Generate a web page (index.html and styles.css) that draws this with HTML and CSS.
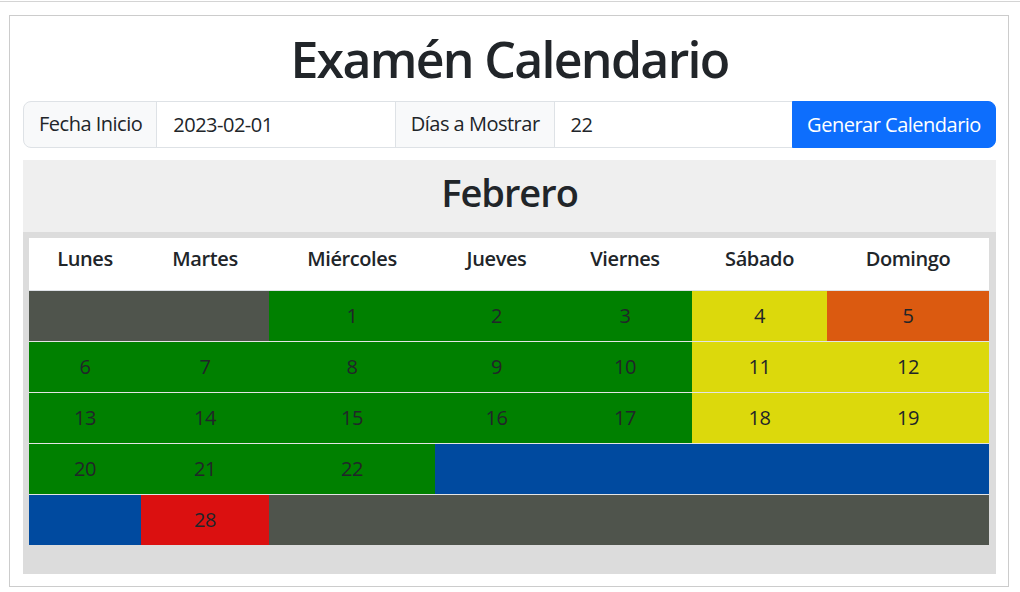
FILE: index.html
```html
<!DOCTYPE html>
<html lang="es">
<head>
<meta charset="utf-8">
<title>Examén Calendario</title>
<link rel="stylesheet" href="styles.css">
</head>
<body>
<div class="page">
  <div class="card">
    <h1 class="title">Examén Calendario</h1>
    <form class="input-group">
      <span class="ig-text">Fecha Inicio</span>
      <input class="ig-input" type="text" value="2023-02-01">
      <span class="ig-text">Días a Mostrar</span>
      <input class="ig-input" type="text" value="22">
      <button class="ig-btn" type="button">Generar Calendario</button>
    </form>
    <section class="month">
      <h2 class="month-name">Febrero</h2>
      <div class="month-body">
        <table class="cal">
          <colgroup>
            <col class="w-lun"><col class="w-mar"><col class="w-mie"><col class="w-jue"><col class="w-vie"><col class="w-sab"><col class="w-dom">
          </colgroup>
          <thead>
            <tr><th>Lunes</th><th>Martes</th><th>Miércoles</th><th>Jueves</th><th>Viernes</th><th>Sábado</th><th>Domingo</th></tr>
          </thead>
          <tbody>
            <tr><td class="off"></td><td class="off"></td><td class="work">1</td><td class="work">2</td><td class="work">3</td><td class="sat">4</td><td class="sun">5</td></tr>
            <tr><td class="work">6</td><td class="work">7</td><td class="work">8</td><td class="work">9</td><td class="work">10</td><td class="sat">11</td><td class="sat">12</td></tr>
            <tr><td class="work">13</td><td class="work">14</td><td class="work">15</td><td class="work">16</td><td class="work">17</td><td class="sat">18</td><td class="sat">19</td></tr>
            <tr><td class="work">20</td><td class="work">21</td><td class="work">22</td><td class="out"></td><td class="out"></td><td class="out"></td><td class="out"></td></tr>
            <tr><td class="out"></td><td class="hol">28</td><td class="off"></td><td class="off"></td><td class="off"></td><td class="off"></td><td class="off"></td></tr>
          </tbody>
        </table>
      </div>
    </section>
  </div>
</div>
</body>
</html>
```

FILE: styles.css
```css
* { box-sizing: border-box; }

html, body {
  margin: 0;
  background: #fff;
}

body {
  font-family: "Open Sans", "Noto Sans", "Liberation Sans", sans-serif;
  color: #212529;
  padding-top: 1px;
}

.page {
  border-top: 1px solid #d4d4d4;
  padding: 13px 11px 0 9px;
}

.card {
  width: 1000px;
  border: 1px solid #cccccc;
  padding: 13px 12px 12px 13px;
}

.title {
  margin: 0 0 12px;
  text-align: center;
  font-size: 50px;
  line-height: 60px;
  font-weight: 600;
  letter-spacing: -1.7px;
}

.input-group {
  display: flex;
  margin: 0;
  height: 47px;
}

.ig-text,
.ig-input,
.ig-btn {
  font-family: inherit;
  font-size: 20px;
  line-height: 30px;
  letter-spacing: -0.5px;
  padding: 7px 16px;
  margin: 0;
  border: 1px solid #dee2e6;
}

.ig-text {
  background: #f8f9fa;
  color: #212529;
  white-space: nowrap;
  flex: none;
  padding-left: 15px;
  padding-right: 14px;
}

.ig-text + .ig-input,
.ig-input + .ig-text,
.ig-input + .ig-btn {
  margin-left: -1px;
}

.input-group > :first-child {
  border-radius: 8px 0 0 8px;
}

.ig-input {
  flex: 1 1 0;
  min-width: 0;
  background: #fff;
  color: #212529;
  outline: none;
}

.ig-btn {
  flex: none;
  width: 204px;
  padding-left: 8px;
  padding-right: 8px;
  white-space: nowrap;
  text-align: center;
  background: #0d6efd;
  border-color: #0d6efd;
  color: #fff;
  border-radius: 0 8px 8px 0;
  cursor: pointer;
}

.month {
  margin-top: 12px;
}

.month-name {
  margin: 0;
  background: #efefef;
  text-align: center;
  font-size: 38px;
  line-height: 48px;
  font-weight: 600;
  letter-spacing: -1px;
  padding: 8px 0 16px;
}

.month-body {
  background: #dcdcdc;
  padding: 6px 7px 29px 6px;
}

.cal {
  width: 100%;
  border-collapse: collapse;
  table-layout: fixed;
  font-size: 20px;
  line-height: 30px;
  letter-spacing: -0.4px;
}

.w-lun { width: 112px; }
.w-mar { width: 128px; }
.w-mie { width: 166px; }
.w-jue { width: 123px; }
.w-vie { width: 134px; }
.w-sab { width: 135px; }
.w-dom { width: 162px; }

.cal th {
  background: #fff;
  font-weight: 600;
  text-align: center;
  padding: 6px 0 16px;
  border-bottom: 1px solid #dee2e6;
}

.cal td {
  text-align: center;
  padding: 10px 0;
  height: 51px;
  border-bottom: 1px solid #e4e4e4;
  color: #212529;
}

.cal tbody tr:last-child td {
  border-bottom: 0;
  height: 50px;
}

.off  { background: #4f544c; }
.work { background: #008000; }
.sat  { background: #dcd90c; }
.sun  { background: #db5a10; }
.out  { background: #004a9f; }
.hol  { background: #db1010; }
```
